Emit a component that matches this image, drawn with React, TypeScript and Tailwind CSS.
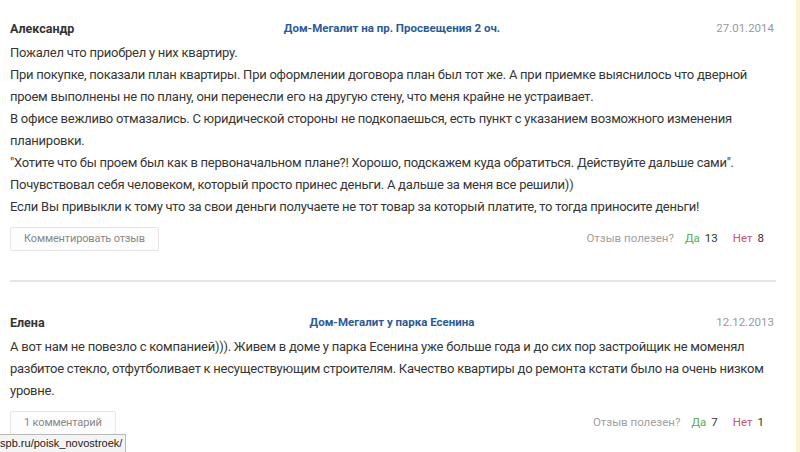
import React from "react";

const font = { fontFamily: 'Roboto, "Liberation Sans", Arial, sans-serif' };

function Review(props: {
  name: string;
  link: string;
  date: string;
  lines: string[];
  button: string;
  yes: number;
  no: number;
}) {
  return (
    <div className="flex flex-col">
      <div className="relative flex h-[18px] items-center justify-between">
        <span className="text-[12.5px] font-bold text-[#333]">{props.name}</span>
        <span className="absolute left-1/2 -translate-x-1/2 whitespace-nowrap text-[11.5px] font-bold text-[#2b5a96]">
          {props.link}
        </span>
        <span className="text-[11.5px] text-[#9a9a9a]">{props.date}</span>
      </div>
      <div className="mt-[4px] whitespace-nowrap text-[13px] leading-[22px] tracking-[-0.25px] text-[#363636]">
        {props.lines.map((l, i) => (
          <div key={i}>{l}</div>
        ))}
      </div>
      <div className="mt-[9px] flex items-center justify-between">
        <div className="flex h-[24px] items-center rounded-[2px] border border-[#e6e6e6] bg-[#fdfdfd] px-[13px] text-[11px] tracking-[-0.15px] text-[#888]">
          {props.button}
        </div>
        <div className="mr-[10px] flex items-center text-[11.5px]">
          <span className="text-[#a0a0a0]">Отзыв полезен?</span>
          <span className="ml-[11px] text-[#5aa94e]">Да</span>
          <span className="ml-[5px] text-[#333]">{props.yes}</span>
          <span className="ml-[15px] text-[#c2577a]">Нет</span>
          <span className="ml-[5px] text-[#333]">{props.no}</span>
        </div>
      </div>
    </div>
  );
}

export default function App() {
  return (
    <div className="relative flex h-[452px] w-[800px] overflow-hidden bg-white" style={font}>
      <div className="min-w-0 flex-1 pl-[10px] pr-[22px] pt-[20px]">
        <Review
          name="Александр"
          link="Дом-Мегалит на пр. Просвещения 2 оч."
          date="27.01.2014"
          lines={[
            "Пожалел что приобрел у них квартиру.",
            "При покупке, показали план квартиры. При оформлении договора план был тот же. А при приемке выяснилось что дверной",
            "проем выполнены не по плану, они перенесли его на другую стену, что меня крайне не устраивает.",
            "В офисе вежливо отмазались. С юридической стороны не подкопаешься, есть пункт с указанием возможного изменения",
            "планировки.",
            "\"Хотите что бы проем был как в первоначальном плане?! Хорошо, подскажем куда обратиться. Действуйте дальше сами\".",
            "Почувствовал себя человеком, который просто принес деньги. А дальше за меня все решили))",
            "Если Вы привыкли к тому что за свои деньги получаете не тот товар за который платите, то тогда приносите деньги!",
          ]}
          button="Комментировать отзыв"
          yes={13}
          no={8}
        />
        <div className="mr-[-2px] mt-[29px] h-[2px] bg-[#e3e6e9]" />
        <div className="mt-[32px]">
          <Review
            name="Елена"
            link="Дом-Мегалит у парка Есенина"
            date="12.12.2013"
            lines={[
              "А вот нам не повезло с компанией))). Живем в доме у парка Есенина уже больше года и до сих пор застройщик не моменял",
              "разбитое стекло, отфутболивает к несуществующим строителям. Качество квартиры до ремонта кстати было на очень низком",
              "уровне.",
            ]}
            button="1 комментарий"
            yes={7}
            no={1}
          />
        </div>
      </div>
      <div className="w-[4px] shrink-0 bg-[#fcf2d6]" />
      <div
        className="absolute bottom-0 left-0 flex h-[18px] items-center overflow-hidden border border-l-0 border-b-0 border-[#b8b8b8] bg-[#f4f4f4] pr-[3px] text-[11px] text-[#222]"
        style={{ fontFamily: '"Liberation Sans", Arial, sans-serif' }}
      >
        <span className="-ml-[3px] whitespace-nowrap">.spb.ru/poisk_novostroek/</span>
      </div>
    </div>
  );
}
